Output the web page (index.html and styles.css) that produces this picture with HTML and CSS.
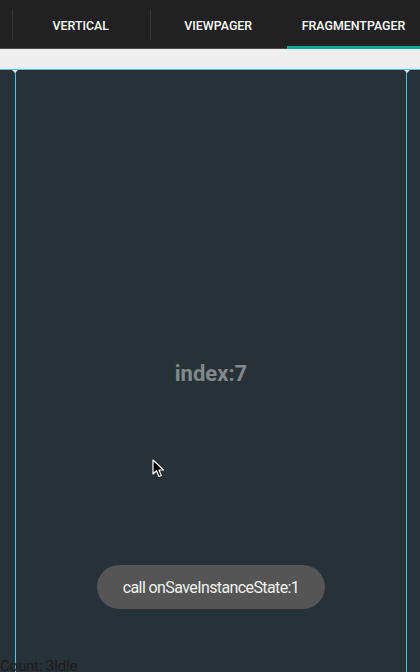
FILE: index.html
```html
<!DOCTYPE html>
<html>
<head>
<meta charset="utf-8">
<link rel="stylesheet" href="styles.css">
</head>
<body>
<div class="app">
  <div class="tabbar">
    <div class="tab tab-partial"></div>
    <div class="tab divided">VERTICAL</div>
    <div class="tab divided">VIEWPAGER</div>
    <div class="tab selected">FRAGMENTPAGER</div>
  </div>
  <div class="band"></div>
  <div class="pager">
    <div class="side side-left"></div>
    <div class="page">
      <div class="page-label">index:7</div>
    </div>
    <div class="side side-right"></div>
  </div>
  <div class="toast">call onSaveInstanceState:1</div>
  <svg class="cursor" width="14" height="20" viewBox="0 0 14 20">
    <path d="M1 1 L1 15 L4.5 11.8 L7 17.5 L9.3 16.5 L6.9 11 L11.5 11 Z" fill="#000" stroke="#fff" stroke-width="1.2" stroke-linejoin="round"/>
  </svg>
  <div class="status">Count: 3Idle</div>
</div>
</body>
</html>
```
FILE: styles.css
```css
html, body {
  margin: 0;
  padding: 0;
}
body {
  width: 420px;
  height: 672px;
  overflow: hidden;
  background: #263238;
  font-family: Roboto, "Noto Sans", sans-serif;
}
.app {
  position: relative;
  width: 420px;
  height: 672px;
  display: flex;
  flex-direction: column;
}
.tabbar {
  height: 48px;
  background: #212121;
  display: flex;
  border-bottom: 1px solid #4a4a4a;
  flex: none;
}
.tab {
  position: relative;
  width: 137.5px;
  flex: none;
  display: flex;
  align-items: center;
  justify-content: center;
  padding-top: 2px;
  box-sizing: border-box;
  color: #ffffff;
  font-weight: 500;
  font-size: 12.4px;
}
.tab-partial {
  width: 12px;
}
.divided::before {
  content: "";
  position: absolute;
  left: 0;
  top: 9px;
  bottom: 8px;
  width: 1px;
  background: #383838;
}
.selected {
  width: 133px;
}
.selected::after {
  content: "";
  position: absolute;
  left: 0;
  right: 0;
  bottom: -1px;
  height: 3px;
  background: #16a596;
}
.band {
  height: 20px;
  background: #eeeeee;
  flex: none;
}
.pager {
  flex: 1;
  display: flex;
  border-top: 1px solid #4fc3f7;
}
.side-left {
  width: 15px;
  flex: none;
}
.side-right {
  width: 13px;
  flex: none;
}
.page {
  position: relative;
  flex: 1;
  border-left: 1px solid #4fc3f7;
  border-right: 1px solid #4fc3f7;
  display: flex;
  align-items: center;
  justify-content: center;
}
.page::before,
.page::after {
  content: "";
  position: absolute;
  top: 0;
  width: 0;
  height: 0;
  border-left: 3px solid transparent;
  border-right: 3px solid transparent;
  border-top: 3px solid #cfe9f5;
}
.page::before {
  left: -4px;
}
.page::after {
  right: -4px;
}
.page-label {
  color: #82888b;
  font-weight: 700;
  font-size: 22px;
  margin-top: 5px;
}
.toast {
  position: absolute;
  left: 97px;
  top: 565px;
  width: 228px;
  height: 44px;
  border-radius: 22px;
  background: #545554;
  color: #f2f2f2;
  font-size: 16px;
  letter-spacing: -0.6px;
  display: flex;
  align-items: center;
  justify-content: center;
}
.cursor {
  position: absolute;
  left: 152px;
  top: 459px;
}
.status {
  position: absolute;
  left: 0;
  top: 657px;
  color: #1c1c1c;
  font-size: 15px;
  line-height: 18px;
  letter-spacing: -0.2px;
}
```
